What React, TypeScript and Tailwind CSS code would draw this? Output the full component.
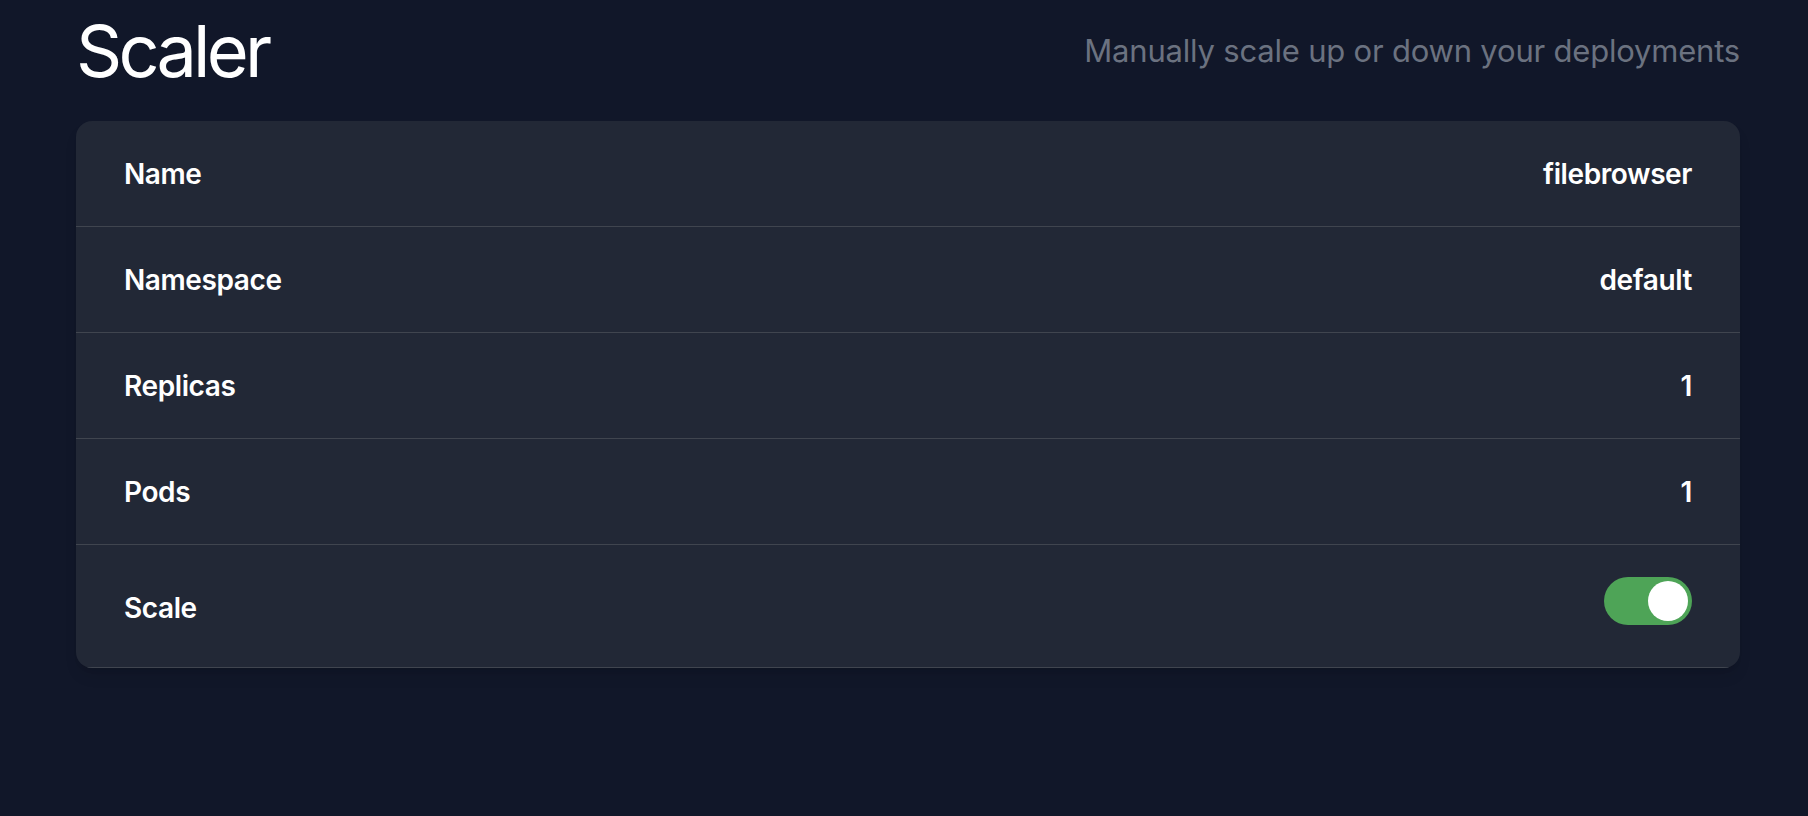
import { useState } from "react"

const rows = [
  { label: "Name", value: "filebrowser" },
  { label: "Namespace", value: "default" },
  { label: "Replicas", value: "1" },
  { label: "Pods", value: "1" },
]

function Toggle({ on, onChange }: { on: boolean; onChange: (v: boolean) => void }) {
  return (
    <button
      onClick={() => onChange(!on)}
      className={`mb-[10px] flex h-[48px] w-[88px] items-center rounded-full p-[4px] ${on ? "justify-end bg-[#4ea457]" : "justify-start bg-[#4b5563]"}`}
    >
      <span className="block h-[40px] w-[40px] rounded-full bg-white" />
    </button>
  )
}

export default function App() {
  const [scaled, setScaled] = useState(true)

  return (
    <div className="min-h-screen bg-[#111729] pl-[76px] pr-[68px] pt-[15px] font-['Inter',sans-serif] text-white">
      <header className="flex items-center justify-between">
        <h1 className="text-[72px] font-normal leading-[72px] tracking-[-3.8px]">Scaler</h1>
        <p className="text-[31px] leading-[40px] tracking-[-0.2px] text-[#6b7280]">Manually scale up or down your deployments</p>
      </header>

      <div className="mt-[34px] overflow-hidden rounded-2xl bg-[#222836] shadow-lg">
        {rows.map((row) => (
          <div key={row.label} className="flex h-[106px] items-center justify-between border-b border-[#40454f] px-[48px] text-[28px] font-semibold tracking-[-0.4px]">
            <span>{row.label}</span>
            <span>{row.value}</span>
          </div>
        ))}
        <div className="flex h-[123px] items-center justify-between border-b border-[#40454f] px-[48px] text-[28px] font-semibold tracking-[-0.4px]">
          <span className="pt-[3px]">Scale</span>
          <Toggle on={scaled} onChange={setScaled} />
        </div>
      </div>
    </div>
  )
}
